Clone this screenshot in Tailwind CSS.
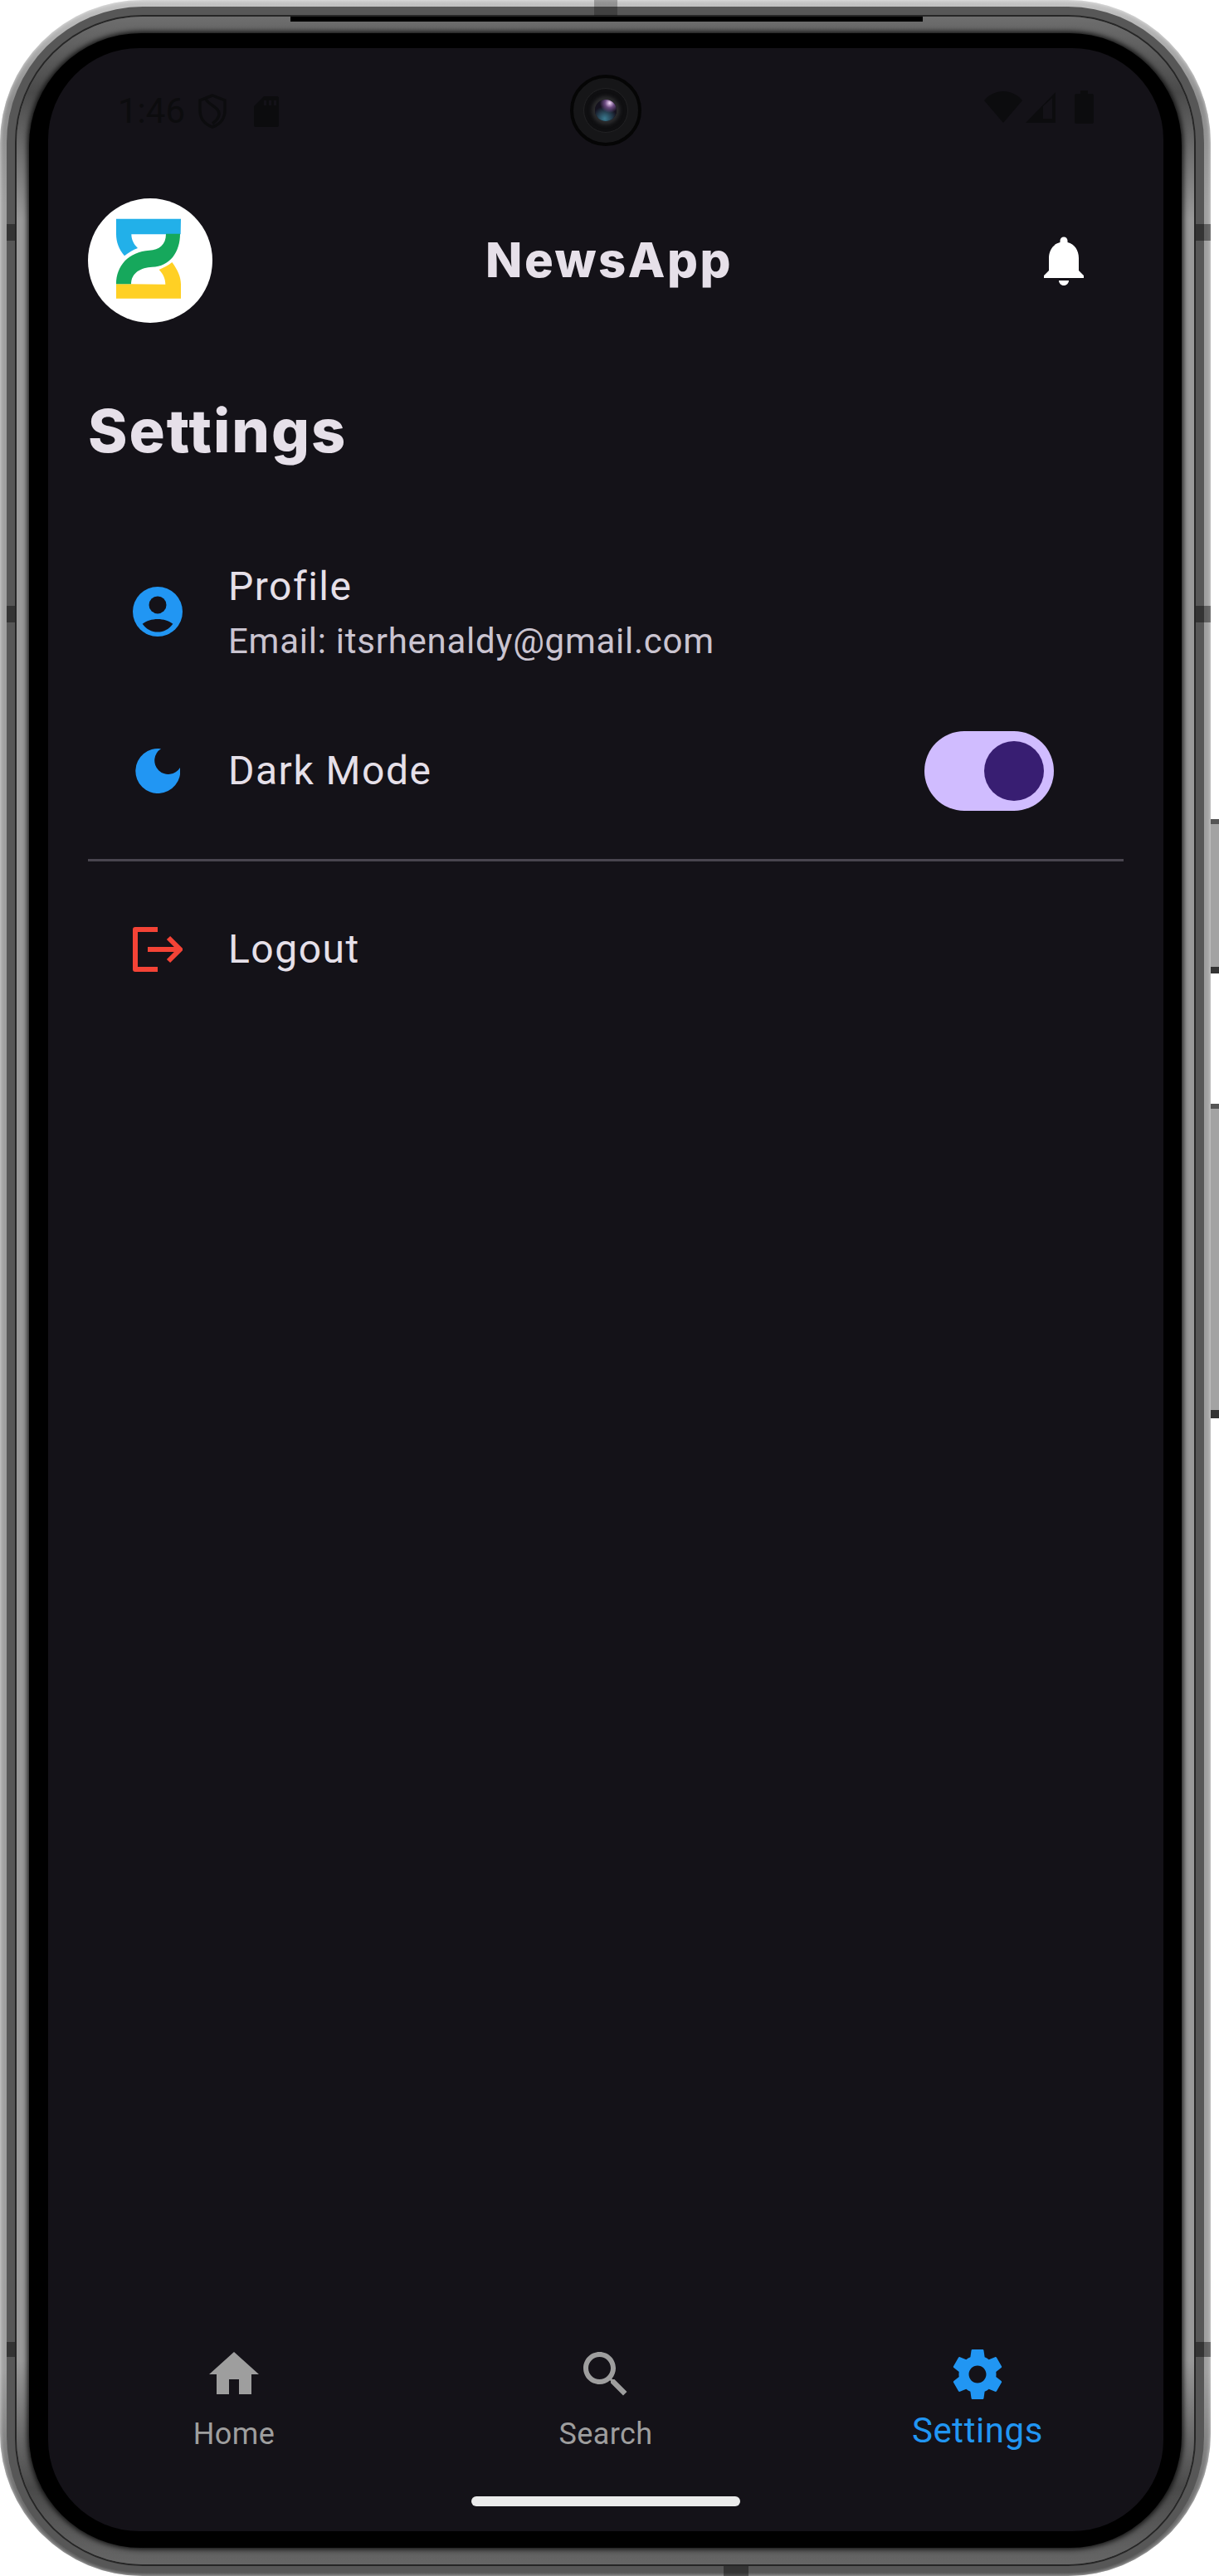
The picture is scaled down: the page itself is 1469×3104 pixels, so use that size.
<!DOCTYPE html>
<html lang="en">
  <head>
    <meta charset="UTF-8" />
    <title>NewsApp Settings</title>
    <script src="https://cdn.jsdelivr.net/npm/@tailwindcss/browser@4"></script>
  </head>
  <body class="bg-white">
    <div class="relative w-[1469px] h-[3104px] overflow-hidden font-['Roboto',sans-serif]">
      <!-- side buttons -->
      <div class="absolute right-0 top-[987px] w-[10px] h-[186px] bg-[#a3a3a3] border-t-[6px] border-b-[8px] border-t-[#555] border-b-[#333]"></div>
      <div class="absolute right-0 top-[1330px] w-[10px] h-[379px] bg-[#a3a3a3] border-t-[6px] border-b-[10px] border-t-[#555] border-b-[#333]"></div>

      <!-- device frame -->
      <div class="relative w-[1459px] h-[3104px] rounded-[172px] pt-[8px] px-[8px] pb-[4px] bg-[linear-gradient(to_bottom,#c4c4c4,#8c8c8c_4%,#a0a0a0_8%,#a0a0a0_92%,#777_96%,#555)] shadow-[inset_0_0_5px_rgba(255,255,255,0.7)]">
        <div class="h-full rounded-[164px] pt-[10px] px-[10px] pb-[8px] bg-[#575757]">
          <div class="h-full rounded-[154px] border-2 border-[#262626]">
            <div class="h-full rounded-[152px] pt-[20px] px-[15px] pb-[20px] bg-[linear-gradient(to_bottom,#6e6e6e,#4a4a4a_3%,#999_8%,#999_92%,#4a4a4a_97%,#666)]">
              <div class="h-full rounded-[135px] pt-[18px] pl-[23px] pr-[22px] pb-[20px] bg-black shadow-[0_0_6px_2px_rgba(0,0,0,0.85)]">

                <!-- screen -->
                <div class="relative h-full rounded-[110px] bg-[#141218] flex flex-col overflow-hidden">
                  <!-- status bar -->
                  <div class="h-[181px] pt-[51px] pl-[84px] pr-[84px] flex justify-between items-start text-[#0c0c0e]">
                    <div class="flex items-center">
                      <span class="text-[42px] leading-[50px] mr-[16px]">1:46</span>
                      <svg class="w-[34px] h-[42px] mr-[33px]" viewBox="0 0 34 42" fill="none" stroke="currentColor" stroke-width="3.5">
                        <path d="M17 2L32 8V20C32 30 26 37 17 40C8 37 2 30 2 20V8Z" />
                        <path d="M9 6C12 14 26 16 25 25C24.5 30 21 33 17 36" />
                      </svg>
                      <svg class="w-[30px] h-[37px]" viewBox="0 0 30 37" fill="currentColor">
                        <path fill-rule="evenodd" d="M12 0H28C29 0 30 1 30 2V35C30 36 29 37 28 37H2C1 37 0 36 0 35V12ZM12 5V11H15V5ZM18 5V11H21V5ZM24 5V11H27V5Z" />
                      </svg>
                    </div>
                    <div class="flex items-center">
                      <svg class="w-[46px] h-[38px] mr-[4px]" viewBox="0 0 46 38" fill="currentColor">
                        <path d="M23 38L0 11C6 4 14 0 23 0S40 4 46 11Z" />
                      </svg>
                      <svg class="w-[37px] h-[37px] mr-[22px]" viewBox="0 0 37 37" fill="currentColor">
                        <path fill-rule="evenodd" d="M36 0V37H0ZM21 17V32H32V7Z" />
                      </svg>
                      <svg class="w-[23px] h-[40px]" viewBox="0 0 23 40" fill="currentColor">
                        <path d="M7 0H16V4H21C22 4 23 5 23 6V38C23 39 22 40 21 40H2C1 40 0 39 0 38V6C0 5 1 4 2 4H7Z" />
                      </svg>
                    </div>
                  </div>

                  <!-- camera -->
                  <div class="absolute left-[629px] top-[32px] w-[86px] h-[86px] rounded-full border-[4px] border-[#050505] bg-[#161618] flex items-center justify-center">
                    <div class="w-[54px] h-[54px] rounded-full border border-[#222224] bg-[#0f0f11] flex items-center justify-center">
                      <div class="w-[26px] h-[26px] rounded-full bg-[radial-gradient(circle_at_68%_16%,#f4d8fa_0%,#6a4a80_20%,transparent_42%),radial-gradient(circle_at_45%_88%,#3a7a90_0%,transparent_55%),linear-gradient(#15121f,#15121f)] shadow-[0_0_4px_4px_#2c2c2e]"></div>
                    </div>
                  </div>

                  <!-- app bar -->
                  <div class="h-[150px] pl-[48px] pr-[84px] grid grid-cols-[1fr_auto_1fr] items-center">
                    <div class="w-[150px] h-[150px] rounded-full bg-white">
                      <svg class="w-full h-full" viewBox="48 42 450 450">
                        <path fill="#22b0e9" d="M150 116H384L383 172H205C205 190 213 208 228 222C210 228 195 238 180 250C160 225 150 200 150 170Z" />
                        <path fill="#ffd024" d="M150 352H204L328 353C328 333 320 315 305 300C322 292 338 285 352 273C372 300 384 325 384 352V404H150Z" />
                        <path fill="#16a85c" d="M330 170H381C381 235 345 288 280 290C240 292 204 310 204 352H150C150 285 195 235 270 230C305 228 330 210 330 170Z" />
                      </svg>
                    </div>
                    <h1 class="ml-[44px] mb-[2px] text-[#e6e0e9] text-[58px] leading-[72px] tracking-[2.5px] font-extrabold font-['Inter',sans-serif]">NewsApp</h1>
                    <svg class="justify-self-end w-[72px] h-[72px]" viewBox="0 0 24 24" fill="#ffffff">
                      <path d="M12 22c1.1 0 2-.9 2-2h-4c0 1.1.89 2 2 2zm6-6v-5c0-3.07-1.64-5.64-4.5-6.32V4c0-.83-.67-1.5-1.5-1.5s-1.5.67-1.5 1.5v.68C7.63 5.36 6 7.92 6 11v5l-2 2v1h16v-1l-2-2z" />
                    </svg>
                  </div>

                  <h2 class="mt-[87px] pl-[48px] text-[#e6e0e9] text-[72px] leading-[86px] tracking-[2px] font-extrabold font-['Inter',sans-serif]">Settings</h2>

                  <!-- settings list -->
                  <div class="mt-[111px] flex items-start pl-[102px]">
                    <svg class="mt-[34px] w-[60px] h-[60px]" viewBox="2 2 20 20">
                      <circle cx="12" cy="12" r="10" fill="#2196f3" />
                      <circle cx="12" cy="9.3" r="3.5" fill="#141218" />
                      <path fill="#141218" d="M5.9 16.9C7.5 15.7 9.7 15 12 15s4.5.7 6.1 1.9C16.6 19 14.4 20.2 12 20.2S7.4 19 5.9 16.9z" />
                    </svg>
                    <div class="ml-[55px] pt-[2px]">
                      <div class="text-[#e6e0e9] text-[48px] leading-[64px] tracking-[1.5px]">Profile</div>
                      <div class="mt-[4px] text-[#cac4d0] text-[42px] leading-[60px] tracking-[0.75px]">Email: itsrhenaldy@gmail.com</div>
                    </div>
                  </div>

                  <div class="mt-[78px] h-[96px] flex items-center pl-[105px] pr-[132px]">
                    <svg class="w-[54px] h-[54px]" viewBox="0 0 54 54" fill="#2196f3">
                      <path d="M31 .3A27 27 0 1 0 54 23A16.6 16.6 0 1 1 31 .3Z" />
                    </svg>
                    <div class="ml-[58px] text-[#e6e0e9] text-[48px] leading-[64px] tracking-[1.5px]">Dark Mode</div>
                    <!-- switch -->
                    <div class="ml-auto w-[156px] h-[96px] rounded-full bg-[#d0bcff] flex items-center justify-end pr-[12px]">
                      <div class="w-[72px] h-[72px] rounded-full bg-[#381e72]"></div>
                    </div>
                  </div>

                  <div class="mt-[58px] ml-[48px] mr-[48px] h-[3px] bg-[#49454f]"></div>

                  <div class="mt-[74px] h-[64px] flex items-center pl-[102px]">
                    <svg class="w-[60px] h-[54px]" viewBox="0 0 60 54" fill="none" stroke="#f44336" stroke-width="6">
                      <path d="M30 3H3V51H30" stroke-linejoin="round" />
                      <path d="M18 27H56" />
                      <path d="M43 13L57 27L43 41" />
                    </svg>
                    <div class="ml-[55px] text-[#e6e0e9] text-[48px] leading-[64px] tracking-[1.5px]">Logout</div>
                  </div>

                  <!-- bottom nav -->
                  <div class="mt-auto grid grid-cols-3">
                    <div class="flex flex-col items-center text-[#9e9e9e]">
                      <svg class="w-[72px] h-[72px]" viewBox="0 0 24 24" fill="currentColor">
                        <path d="M10 20v-6h4v6h5v-8h3L12 3 2 12h3v8z" />
                      </svg>
                      <span class="mt-[12px] text-[36px] leading-[48px] tracking-[0.4px]">Home</span>
                    </div>
                    <div class="flex flex-col items-center text-[#9e9e9e]">
                      <svg class="w-[72px] h-[72px]" viewBox="0 0 24 24" fill="currentColor">
                        <path d="M15.5 14h-.79l-.28-.27C15.41 12.59 16 11.11 16 9.5 16 5.91 13.09 3 9.5 3S3 5.91 3 9.5 5.91 16 9.5 16c1.61 0 3.09-.59 4.23-1.57l.27.28v.79l5 4.99L20.49 19l-4.99-5zm-6 0C7.01 14 5 11.99 5 9.5S7.01 5 9.5 5 14 7.01 14 9.5 11.99 14 9.5 14z" />
                      </svg>
                      <span class="mt-[12px] text-[36px] leading-[48px] tracking-[0.4px]">Search</span>
                    </div>
                    <div class="flex flex-col items-center text-[#2196f3]">
                      <svg class="w-[72px] h-[72px]" viewBox="0 0 24 24" fill="currentColor">
                        <path d="M19.43 12.98c.04-.32.07-.64.07-.98 0-.34-.03-.66-.07-.98l2.11-1.65c.19-.15.24-.42.12-.64l-2-3.46c-.12-.22-.39-.3-.61-.22l-2.49 1c-.52-.4-1.08-.73-1.69-.98l-.38-2.65C14.46 2.18 14.25 2 14 2h-4c-.25 0-.46.18-.49.42l-.38 2.65c-.61.25-1.17.59-1.69.98l-2.49-1c-.23-.09-.49 0-.61.22l-2 3.46c-.13.22-.07.49.12.64l2.11 1.65c-.04.32-.07.65-.07.98 0 .33.03.66.07.98l-2.11 1.65c-.19.15-.24.42-.12.64l2 3.46c.12.22.39.3.61.22l2.49-1c.52.4 1.08.73 1.69.98l.38 2.65c.03.24.24.42.49.42h4c.25 0 .46-.18.49-.42l.38-2.65c.61-.25 1.17-.59 1.69-.98l2.49 1c.23.09.49 0 .61-.22l2-3.46c.12-.22.07-.49-.12-.64l-2.11-1.65zM12 15.5c-1.93 0-3.5-1.57-3.5-3.5s1.57-3.5 3.5-3.5 3.5 1.57 3.5 3.5-1.57 3.5-3.5 3.5z" />
                      </svg>
                      <span class="mt-[4px] text-[42px] leading-[56px] tracking-[0.6px]">Settings</span>
                    </div>
                  </div>

                  <!-- home indicator -->
                  <div class="mt-[51px] mb-[30px] mx-auto w-[324px] h-[12px] rounded-full bg-[#ebebeb]"></div>
                </div>

              </div>
            </div>
          </div>
        </div>

        <!-- top edge recess and frame seams -->
        <div class="absolute top-[20px] left-[350px] right-[347px] h-[6px] bg-black"></div>
        <div class="absolute top-0 left-[716px] w-[28px] h-[19px] bg-black/25"></div>
        <div class="absolute top-[270px] left-[8px] w-[10px] h-[20px] bg-black/40"></div>
        <div class="absolute top-[270px] right-[0px] w-[18px] h-[20px] bg-black/40"></div>
        <div class="absolute top-[730px] left-[8px] w-[10px] h-[20px] bg-black/40"></div>
        <div class="absolute top-[730px] right-[0px] w-[18px] h-[20px] bg-black/40"></div>
        <div class="absolute top-[2822px] left-[8px] w-[10px] h-[18px] bg-black/40"></div>
        <div class="absolute top-[2822px] right-[0px] w-[18px] h-[18px] bg-black/40"></div>
        <div class="absolute bottom-0 left-[872px] w-[30px] h-[12px] bg-black/40"></div>
      </div>
    </div>
  </body>
</html>
